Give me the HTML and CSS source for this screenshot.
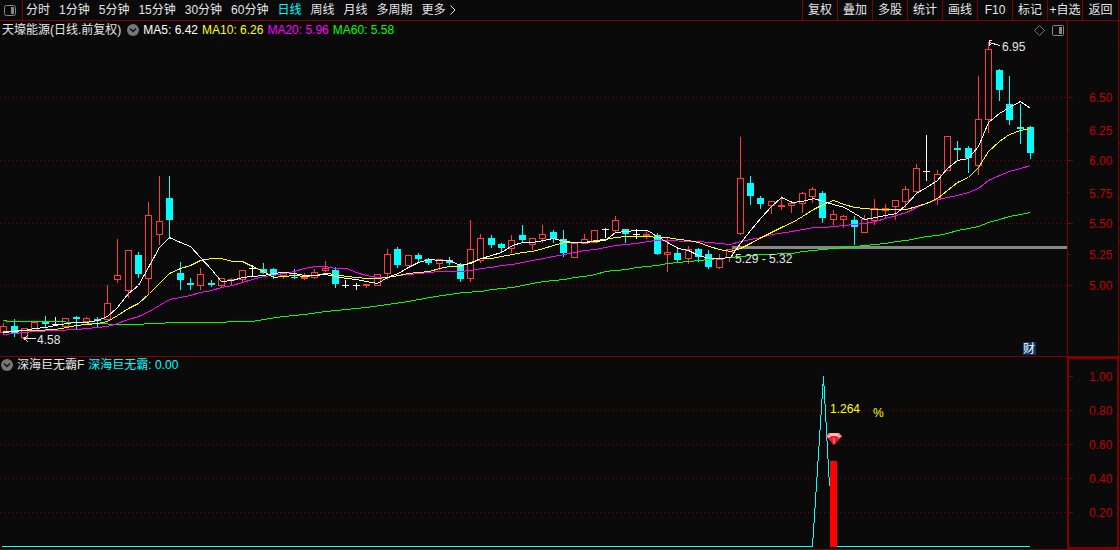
FILE: index.html
```
<!DOCTYPE html>
<html lang="zh-CN">
<head>
    <meta charset="UTF-8">
    <meta name="viewport" content="width=device-width, initial-scale=1.0">
    <title>天壕能源 - 日线</title>
    <link rel="stylesheet" href="styles.css">
</head>
<body>
    <header class="toolbar">
        <button class="btn-layout" aria-label="布局">
            <svg width="12" height="11" viewBox="0 0 12 11"><rect x="0.5" y="0.5" width="11" height="10" rx="2" fill="none" stroke="#888"/><rect x="7" y="2" width="3" height="7" fill="#888"/></svg>
        </button>
        <nav class="periods">
            <button>分时</button>
            <button>1分钟</button>
            <button>5分钟</button>
            <button>15分钟</button>
            <button>30分钟</button>
            <button>60分钟</button>
            <button class="active">日线</button>
            <button>周线</button>
            <button>月线</button>
            <button>多周期</button>
            <button class="more">更多
                <svg width="6" height="10" viewBox="0 0 6 10"><path d="M0.5 0.5L5 5L0.5 9.5" fill="none" stroke="#e6e6e6"/></svg>
            </button>
        </nav>
        <div class="tools">
            <button>复权</button>
            <button>叠加</button>
            <button>多股</button>
            <button>统计</button>
            <button>画线</button>
            <button>F10</button>
            <button>标记</button>
            <button>+自选</button>
            <button>返回</button>
        </div>
    </header>

    <main>
        <section class="panel">
            <div class="legend">
                <span class="name">天壕能源(日线.前复权)</span>
                <button class="btn-drop" aria-label="展开">
                    <svg width="12" height="12" viewBox="0 0 12 12"><circle cx="6" cy="6" r="6" fill="#777"/><path d="M3 4.5L6 7.5L9 4.5" fill="none" stroke="#111" stroke-width="1.4"/></svg>
                </button>
                <span class="ma5">MA5: 6.42</span>
                <span class="ma10">MA10: 6.26</span>
                <span class="ma20">MA20: 5.96</span>
                <span class="ma60">MA60: 5.58</span>
                <div class="legend-tools">
                    <button aria-label="标记点">
                        <svg width="11" height="11" viewBox="0 0 11 11"><path d="M5.5 0.5L10.5 5.5L5.5 10.5L0.5 5.5Z" fill="none" stroke="#777"/></svg>
                    </button>
                    <button aria-label="侧栏">
                        <svg width="12" height="11" viewBox="0 0 12 11"><rect x="0.5" y="0.5" width="11" height="10" rx="1" fill="none" stroke="#888"/><rect x="7" y="2" width="3" height="7" fill="#888"/></svg>
                    </button>
                </div>
            </div>
            <svg class="chart" viewBox="0 21 1120 336">
                <g class="grid">
                    <path d="M0 97.5H1067M0 160.5H1067M0 223.5H1067M0 285.5H1067"/>
                </g>
                <rect class="band" x="732" y="246" width="335" height="3"/>
                <g id="candles"></g>
                <g id="averages"></g>
                <g class="axis">
                    <path d="M1067.5 21V356M1118.5 21V356M0 356.5H1120"/>
                    <path d="M1068 97.5H1073M1068 129.5H1070M1068 160.5H1073M1068 192.5H1070M1068 223.5H1073M1068 254.5H1070M1068 285.5H1073"/>
                    <path d="M1119 46.5H1120M1119 143.5H1120M1119 240.5H1120M1119 337.5H1120"/>
                </g>
                <g class="axis-text">
                    <text x="1089" y="102">6.50</text>
                    <text x="1089" y="135">6.25</text>
                    <text x="1089" y="165">6.00</text>
                    <text x="1089" y="198">5.75</text>
                    <text x="1089" y="228">5.50</text>
                    <text x="1089" y="259">5.25</text>
                    <text x="1089" y="290">5.00</text>
                </g>
                <g class="mark">
                    <path d="M1000 45.5L989 42.5M992 40.5H989V46M989 42.5L991 45"/>
                    <text x="1002" y="51">6.95</text>
                    <path d="M36 338.5H24M28 335L24 338.5L28 342"/>
                    <text x="37" y="344">4.58</text>
                    <text x="735" y="263">5.29 - 5.32</text>
                </g>
                <rect class="report-box" x="1023" y="342" width="13" height="13"/>
                <text class="report" x="1023" y="353">财</text>
            </svg>
        </section>

        <section class="panel">
            <div class="legend sub">
                <button class="btn-drop" aria-label="展开">
                    <svg width="12" height="12" viewBox="0 0 12 12"><circle cx="6" cy="6" r="6" fill="#777"/><path d="M3 4.5L6 7.5L9 4.5" fill="none" stroke="#111" stroke-width="1.4"/></svg>
                </button>
                <span>深海巨无霸F</span>
                <span class="indicator">深海巨无霸: 0.00</span>
            </div>
            <svg class="chart" viewBox="0 357 1120 193">
                <g class="grid">
                    <path d="M0 410.5H1067M0 444.5H1067M0 478.5H1067M0 512.5H1067"/>
                </g>
                <g class="axis">
                    <path d="M0 549.5H1120"/>
                    <path d="M1068 376.5H1073M1068 393.5H1070M1068 410.5H1073M1068 427.5H1070M1068 444.5H1073M1068 461.5H1070M1068 478.5H1073M1068 495.5H1070M1068 512.5H1073"/>
                    <path d="M1119 398.5H1120M1119 421.5H1120M1119 440.5H1120"/>
                    <rect class="frame" x="1068" y="358" width="50" height="190"/>
                </g>
                <g class="axis-text">
                    <text x="1089" y="381">1.00</text>
                    <text x="1089" y="415">0.80</text>
                    <text x="1089" y="449">0.60</text>
                    <text x="1089" y="483">0.40</text>
                    <text x="1089" y="517">0.20</text>
                </g>
                <path class="signal" d="M2 546.5H812.5L823.5 376.5L829.5 486M837 546.5H1030"/>
                <rect class="bar" x="830" y="461" width="7" height="86"/>
                <g class="gem">
                    <path d="M829 433H839L842 436.5L834 445L826 436.5Z" fill="#e8202e"/>
                    <path d="M829 433H839L842 436.5L839 438L837 436H831L829 438L826 436.5Z" fill="#ff8a8a"/>
                    <path d="M830 434H838M828 437L831 435.5H837L840 437" fill="none" stroke="#ffd6d6"/>
                    <path d="M834 438V444" fill="none" stroke="#ff8a8a"/>
                </g>
                <g class="signal-text">
                    <text x="830" y="413">1.264</text>
                    <text x="873" y="417">%</text>
                </g>
            </svg>
        </section>
    </main>

    <script src="chart.js"></script>
</body>
</html>
```
FILE: styles.css
```
* {
    margin: 0;
    padding: 0;
    box-sizing: border-box;
}

body {
    background-color: #0a0a0a;
    color: #e6e6e6;
    font-family: "Liberation Sans", "Noto Sans CJK SC", sans-serif;
    font-size: 12px;
    line-height: 20px;
}

button {
    background: none;
    border: none;
    color: inherit;
    font: inherit;
    white-space: nowrap;
    cursor: pointer;
}

button svg {
    display: block;
}

.toolbar {
    display: flex;
    height: 21px;
    border-bottom: 1px solid #800000;
}

.btn-layout {
    width: 23px;
    padding-left: 4px;
    border-right: 1px solid #800000;
}

.periods {
    display: flex;
    gap: 9px;
    padding-left: 3px;
}

.periods .active {
    color: #00ffff;
}

.more {
    display: flex;
    align-items: center;
    gap: 4px;
}

.tools {
    display: flex;
    margin-left: auto;
    margin-right: 1px;
    border-right: 1px solid #800000;
}

.tools button {
    width: 35px;
    border-left: 1px solid #800000;
}

.tools button:last-child {
    width: 36px;
}

.panel {
    position: relative;
}

/* the legend lies over the top edge of the chart */
.legend {
    position: absolute;
    top: 0;
    left: 0;
    width: 100%;
    height: 18px;
    display: flex;
    align-items: center;
    gap: 4px;
    padding-left: 2px;
    padding-right: 56px;
    line-height: 18px;
    white-space: nowrap;
}

.legend.sub {
    height: 16px;
    padding-left: 1px;
}

.name {
    margin-right: 2px;
}

.legend-tools {
    display: flex;
    gap: 7px;
    margin-left: auto;
}

.ma5 {
    color: #ffffff;
}

.ma10 {
    color: #ffff00;
}

.ma20 {
    color: #ff00ff;
}

.ma60 {
    color: #00ff00;
}

.indicator {
    color: #00ffff;
}

.chart {
    display: block;
    width: 100%;
    height: auto;
    font-size: 12px;
}

.chart path,
.chart rect,
.chart polyline {
    shape-rendering: crispEdges;
}

.grid path {
    stroke: #900000;
    stroke-dasharray: 1 3;
}

.axis path,
.frame {
    fill: none;
    stroke: #800000;
}

.frame {
    stroke-width: 2px;
}

.axis-text {
    fill: #c00000;
}

.band {
    fill: #888888;
}

.up {
    fill: #ff3c3c;
}

.up-body {
    fill: #0a0a0a;
    stroke: #ff3c3c;
}

.down {
    fill: #00ffff;
}

.flat {
    fill: #ffffff;
}

.average {
    fill: none;
}

.mark path {
    fill: none;
    stroke: #e6e6e6;
}

.mark text {
    fill: #e6e6e6;
}

.report-box {
    fill: #0a3768;
}

.report {
    fill: #ffffff;
}

.signal {
    fill: none;
    stroke: #00ffff;
}

.signal-text {
    fill: #ffff00;
}

.bar {
    fill: #ff0000;
}

.chart .gem path {
    shape-rendering: auto;
}
```
FILE: chart.js
```
// type, high, body top, body bottom, low (chart y)
// u = up, d = down, f = flat
const candles = [
    ['u', 323, 326, 333, 335], ['d', 319, 326, 334, 337], ['u', 328, 328, 338, 338], ['u', 322, 322, 331, 331],
    ['d', 316, 322, 324, 327], ['f', 317, 324, 325, 326], ['u', 318, 318, 327, 327], ['d', 316, 317, 319, 329],
    ['u', 317, 318, 322, 322], ['d', 317, 319, 321, 327], ['u', 285, 303, 320, 320], ['u', 239, 275, 280, 283],
    ['u', 250, 250, 291, 298], ['d', 252, 255, 274, 278], ['u', 202, 215, 279, 294], ['u', 176, 221, 235, 245],
    ['d', 176, 198, 220, 239], ['d', 262, 273, 280, 290], ['d', 278, 283, 285, 290], ['u', 268, 274, 286, 290],
    ['d', 280, 283, 285, 287], ['u', 278, 278, 286, 287], ['u', 278, 279, 281, 285], ['u', 270, 270, 280, 282],
    ['f', 265, 268, 269, 276], ['d', 263, 269, 273, 274], ['d', 268, 269, 275, 279], ['u', 272, 273, 276, 279],
    ['d', 269, 277, 278, 279], ['u', 273, 277, 279, 280], ['u', 269, 272, 278, 279], ['u', 261, 268, 271, 272],
    ['d', 267, 270, 284, 288], ['f', 280, 285, 286, 288], ['f', 283, 285, 286, 290], ['u', 284, 284, 286, 288],
    ['u', 274, 274, 286, 286], ['u', 249, 254, 274, 280], ['d', 247, 249, 265, 268], ['u', 255, 255, 266, 266],
    ['d', 253, 255, 259, 262], ['d', 258, 259, 263, 265], ['u', 259, 259, 264, 270], ['d', 257, 260, 263, 265],
    ['d', 263, 264, 279, 282], ['u', 220, 249, 279, 282], ['u', 234, 238, 261, 263], ['d', 235, 238, 245, 248],
    ['d', 243, 244, 248, 252], ['u', 235, 240, 249, 253], ['d', 225, 235, 240, 242], ['u', 238, 238, 245, 250],
    ['u', 225, 234, 239, 243], ['d', 230, 232, 239, 243], ['d', 230, 239, 253, 257], ['u', 243, 243, 258, 258],
    ['u', 234, 239, 244, 244], ['u', 230, 230, 243, 243], ['f', 228, 229, 230, 238], ['u', 216, 220, 231, 232],
    ['d', 229, 229, 234, 243], ['f', 229, 234, 235, 239], ['u', 231, 234, 236, 239], ['d', 233, 235, 254, 255],
    ['u', 238, 252, 255, 272], ['d', 248, 253, 260, 262], ['u', 246, 249, 259, 264], ['d', 248, 249, 257, 262],
    ['d', 250, 254, 267, 269], ['u', 254, 259, 268, 269], ['u', 249, 249, 258, 262], ['u', 137, 178, 234, 235],
    ['d', 176, 183, 196, 205], ['d', 196, 198, 204, 209], ['u', 201, 201, 206, 214], ['u', 196, 205, 207, 210],
    ['u', 201, 203, 206, 213], ['u', 192, 193, 204, 213], ['u', 187, 189, 197, 203], ['d', 191, 193, 218, 223],
    ['u', 210, 214, 220, 225], ['u', 215, 216, 220, 228], ['d', 216, 220, 227, 245], ['u', 215, 219, 233, 233],
    ['u', 199, 208, 221, 225], ['u', 204, 208, 211, 218], ['u', 200, 200, 207, 220], ['u', 186, 189, 202, 208],
    ['u', 164, 168, 192, 194], ['f', 135, 171, 172, 181], ['u', 170, 174, 200, 205], ['u', 136, 136, 171, 171],
    ['d', 141, 148, 150, 160], ['d', 146, 148, 158, 173], ['u', 76, 119, 166, 175], ['u', 42, 49, 120, 133],
    ['d', 69, 70, 90, 101], ['d', 76, 104, 120, 125], ['d', 104, 127, 129, 144], ['d', 126, 127, 153, 159]
];

const averages = [
    {
        color: '#00ff00',
        points: '3,320 9,321 55,321 76,322 97,323 117,324 138,324 149,323 180,322 221,322 232,321 252,321 263,319 283,316 304,314 325,311 346,309 366,307 387,304 408,301 429,297 449,294 463,292 481,291 491,289 512,287 522,285 532,283 543,281 564,279 574,277 584,276 595,274 605,271 615,270 626,269 636,267 657,265 667,263 688,261 719,258 730,257 740,256 761,254 792,253 802,251 813,250 833,248 854,246 875,244 885,243 896,241 906,240 916,238 926,236 937,235 947,233 957,230 968,228 978,226 988,222 999,219 1009,216 1020,214 1030,212'
    },
    {
        color: '#ff00ff',
        points: '3,334 14,333 34,331 76,329 97,327 107,326 117,323 128,319 138,316 149,311 159,305 169,299 180,297 190,295 200,292 211,290 221,287 232,285 242,282 252,279 263,276 273,275 283,273 294,271 304,268 315,266 325,266 335,268 346,268 356,272 366,275 377,277 387,277 398,275 408,274 439,271 460,271 470,270 481,268 491,267 501,265 512,264 522,262 532,260 543,258 553,256 564,254 574,252 584,250 595,249 605,247 615,245 626,244 636,243 647,241 657,240 698,241 709,242 719,243 730,244 740,241 750,239 761,237 771,234 792,231 813,227 823,227 844,225 864,223 875,221 885,218 896,215 906,212 916,207 926,203 937,199 947,197 957,195 968,192 978,188 988,180 999,175 1009,171 1020,168 1030,165'
    },
    {
        color: '#ffff00',
        points: '3,331 24,330 34,330 55,329 66,327 76,325 86,324 97,323 107,321 117,315 128,308 138,303 149,293 159,283 169,273 180,268 190,265 200,260 211,258 221,258 232,261 242,261 252,266 263,271 273,277 283,276 294,275 304,276 315,275 325,273 335,274 346,276 356,277 366,278 377,278 387,277 398,275 408,273 418,272 429,271 439,268 449,266 460,266 470,262 481,258 491,258 501,256 512,254 522,252 532,251 543,248 553,245 564,242 584,242 595,240 605,239 615,237 626,236 647,236 657,237 667,237 678,239 688,240 698,242 709,246 719,249 730,251 740,248 750,243 761,237 771,232 781,227 792,222 802,216 813,209 823,204 833,200 844,204 854,207 864,208 875,209 906,209 916,206 926,203 937,198 947,190 957,182 968,177 978,167 988,151 999,141 1009,134 1020,130 1030,128'
    },
    {
        color: '#ffffff',
        points: '3,332 14,331 24,330 34,328 45,327 55,325 66,323 76,322 86,322 97,320 107,316 117,307 128,293 138,285 149,265 159,247 169,237 180,242 190,246 200,257 211,269 221,281 232,280 242,277 252,276 263,275 273,273 283,272 294,273 304,275 315,275 325,274 335,276 346,278 356,279 366,281 377,283 387,277 398,273 408,267 418,262 429,259 439,260 449,260 460,265 470,263 481,258 491,255 501,252 512,245 522,242 532,242 543,240 553,238 564,241 574,242 584,242 595,241 605,240 615,232 626,231 636,230 647,230 657,236 667,242 678,248 688,250 698,255 709,258 719,258 730,257 740,243 750,230 761,217 771,206 781,197 792,202 802,201 813,198 823,201 833,204 844,207 854,213 864,219 875,217 885,215 896,213 906,204 916,193 926,187 937,180 947,168 957,160 968,158 978,146 988,122 999,113 1009,107 1020,101 1030,108'
    }
];

const names = { u: 'up', d: 'down', f: 'flat' };

document.getElementById('candles').innerHTML = candles.map(function([type, high, top, bottom, low], i) {
    const x = Math.floor(3.75 + i * 10.37);
    const cls = names[type];
    const wick = `<rect class="${cls}" x="${x}" y="${high}" width="1" height="${low - high}"/>`;
    if (type === 'u' && bottom - top > 2) {
        return wick + `<rect class="up-body" x="${x - 2.5}" y="${top + 0.5}" width="6" height="${bottom - top - 1}"/>`;
    }
    return wick + `<rect class="${cls}" x="${x - 3}" y="${top}" width="7" height="${bottom - top}"/>`;
}).join('');

// shift by half a pixel so that the lines fall on whole pixels
document.getElementById('averages').innerHTML = averages.map(function(line) {
    return `<polyline class="average" transform="translate(0.5 0.5)" stroke="${line.color}" points="${line.points}"/>`;
}).join('');
```
